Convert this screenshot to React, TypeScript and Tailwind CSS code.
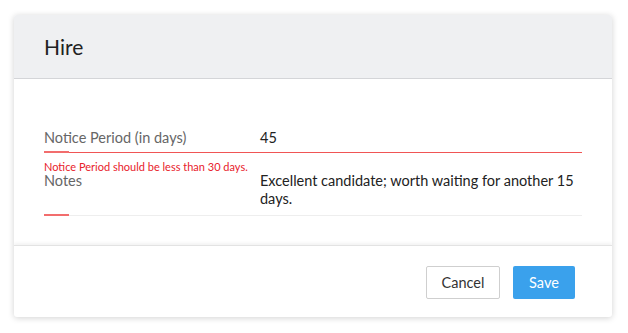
import React from 'react'

const font = { fontFamily: 'Lato, "Open Sans", sans-serif' }

function FocusMark() {
  return <span className="absolute left-0 bottom-[-1px] h-[2px] w-[25px] bg-[#f26d6d]" />
}

export default function App() {
  return (
    <div className="w-[628px] h-[333px] bg-white pt-[15px]" style={font}>
      <div className="ml-[14px] w-[598px] rounded-[3px] bg-white shadow-[0_1px_6px_rgba(0,0,0,0.18)] overflow-hidden">
        <div className="h-[64px] bg-[#eff0f2] border-b border-[#d4d5d8] flex items-center px-[30px]">
          <h1 className="text-[21px] text-[#222] font-normal">Hire</h1>
        </div>

        <div className="px-[30px] pt-[49px] pb-[29px]">
          <div className="relative flex border-b border-b-[#f05555] pb-[4px]">
            <div className="w-[216px] text-[14.5px] leading-[20px] text-[#666]">Notice Period (in days)</div>
            <div className="flex-1 text-[14.5px] leading-[20px] text-[#222]">45</div>
            <FocusMark />
          </div>
          <div className="mt-[9px] text-[11px] leading-[10px] text-[#e8212b]">Notice Period should be less than 30 days.</div>
          <div className="relative flex border-b border-b-[#eeeeee] pb-[7px]">
            <div className="w-[216px] text-[14.5px] leading-[18px] text-[#666]">Notes</div>
            <div className="flex-1 text-[14.5px] leading-[18px] text-[#222]">
              Excellent candidate; worth waiting for another 15 days.
            </div>
            <FocusMark />
          </div>
        </div>

        <div className="border-t border-[#e3e3e3] shadow-[0_-2px_3px_rgba(0,0,0,0.05)] flex justify-end gap-[13px] pt-[20px] pb-[18px] pr-[37px]">
          <button className="h-[33px] w-[74px] rounded-[2px] border border-[#cfcfcf] bg-white text-[14.5px] text-[#333]">Cancel</button>
          <button className="h-[33px] w-[62px] rounded-[2px] bg-[#3aa1ec] text-[14.5px] text-white">Save</button>
        </div>
      </div>
    </div>
  )
}
